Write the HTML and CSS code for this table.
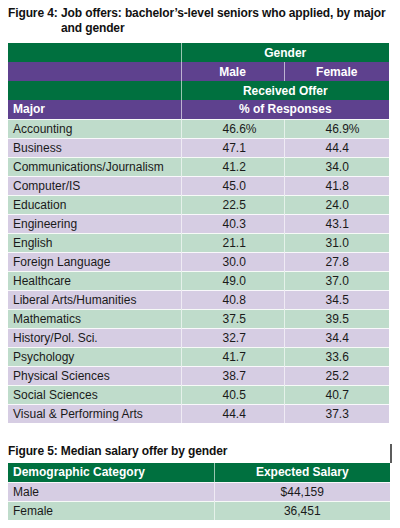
FILE: index.html
```html
<!DOCTYPE html>
<html lang="en">
<head>
    <meta charset="UTF-8">
    <meta name="viewport" content="width=device-width, initial-scale=1.0">
    <title>Job offers by major and gender</title>
    <link rel="stylesheet" href="styles.css">
</head>
<body>
    <div class="page">
        <h2 class="fig-title">
            <span class="fig-label">Figure 4:</span>
            <span class="fig-text">Job offers: bachelor’s-level seniors who applied, by major and gender</span>
        </h2>

        <table class="data offers">
            <colgroup>
                <col class="c-major">
                <col class="c-male">
                <col class="c-female">
            </colgroup>
            <thead>
                <tr class="green">
                    <th class="split"></th>
                    <th colspan="2">Gender</th>
                </tr>
                <tr class="purple">
                    <th class="split"></th>
                    <th class="split">Male</th>
                    <th>Female</th>
                </tr>
                <tr class="green">
                    <th class="split"></th>
                    <th colspan="2">Received Offer</th>
                </tr>
                <tr class="purple">
                    <th class="split left">Major</th>
                    <th colspan="2">% of Responses</th>
                </tr>
            </thead>
            <tbody>
                <tr class="lg"><td>Accounting</td><td>46.6%</td><td>46.9%</td></tr>
                <tr class="lp"><td>Business</td><td>47.1</td><td>44.4</td></tr>
                <tr class="lg"><td>Communications/Journalism</td><td>41.2</td><td>34.0</td></tr>
                <tr class="lp"><td>Computer/IS</td><td>45.0</td><td>41.8</td></tr>
                <tr class="lg"><td>Education</td><td>22.5</td><td>24.0</td></tr>
                <tr class="lp"><td>Engineering</td><td>40.3</td><td>43.1</td></tr>
                <tr class="lg"><td>English</td><td>21.1</td><td>31.0</td></tr>
                <tr class="lp"><td>Foreign Language</td><td>30.0</td><td>27.8</td></tr>
                <tr class="lg"><td>Healthcare</td><td>49.0</td><td>37.0</td></tr>
                <tr class="lp"><td>Liberal Arts/Humanities</td><td>40.8</td><td>34.5</td></tr>
                <tr class="lg"><td>Mathematics</td><td>37.5</td><td>39.5</td></tr>
                <tr class="lp"><td>History/Pol. Sci.</td><td>32.7</td><td>34.4</td></tr>
                <tr class="lg"><td>Psychology</td><td>41.7</td><td>33.6</td></tr>
                <tr class="lp"><td>Physical Sciences</td><td>38.7</td><td>25.2</td></tr>
                <tr class="lg"><td>Social Sciences</td><td>40.5</td><td>40.7</td></tr>
                <tr class="lp"><td>Visual &amp; Performing Arts</td><td>44.4</td><td>37.3</td></tr>
            </tbody>
        </table>

        <h2 class="fig-title second">Figure 5: Median salary offer by gender</h2>

        <table class="data salary">
            <colgroup>
                <col class="c-demo">
                <col class="c-salary">
            </colgroup>
            <thead>
                <tr class="green">
                    <th class="split left">Demographic Category</th>
                    <th>Expected Salary</th>
                </tr>
            </thead>
            <tbody>
                <tr class="lp"><td>Male</td><td class="mid">$44,159</td></tr>
                <tr class="lg"><td>Female</td><td class="mid">36,451</td></tr>
            </tbody>
        </table>
    </div>
</body>
</html>
```

FILE: styles.css
```css
body {
    margin: 0;
    background: #fff;
    font-family: 'Liberation Sans', Arial, sans-serif;
    color: #1a1a1a;
}
.page {
    padding: 6px 0 0 8px;
}
.fig-title {
    display: flex;
    margin: 0;
    width: 390px;
    font-size: 12px;
    line-height: 15px;
    font-weight: bold;
    letter-spacing: -0.12px;
    color: #111;
}
.fig-label {
    flex: 0 0 53px;
}
.fig-text {
    flex: 1;
}
.fig-title.second {
    display: block;
    box-sizing: border-box;
    width: 384px;
    height: 19px;
    margin-top: 21px;
    border-right: 2px solid #5c5c5c;
}
.data {
    border-collapse: collapse;
    table-layout: fixed;
    font-size: 12px;
}
.offers {
    width: 381px;
    margin-top: 7px;
}
.salary {
    width: 382px;
}
.c-major { width: 173px; }
.c-male { width: 103px; }
.c-female { width: 105px; }
.c-demo { width: 206px; }
.c-salary { width: 176px; }

.data th,
.data td {
    height: 19px;
    padding: 0;
    box-sizing: border-box;
    white-space: nowrap;
}
.data th {
    color: #fff;
    font-weight: bold;
    text-align: center;
}
.data th.left {
    text-align: left;
    padding-left: 5px;
}
.data th.split,
.data td:not(:last-child) {
    border-right: 1px solid rgba(255, 255, 255, 0.6);
}
.data td {
    border-top: 1px solid rgba(255, 255, 255, 0.85);
    padding-left: 41px;
}
.data td:first-child {
    padding-left: 5px;
}
.data td.mid {
    padding-left: 0;
    text-align: center;
}
.green { background: #00703f; }
.purple { background: #5e418e; }
.lg { background: #bfdccb; }
.lp { background: #d6cde3; }
```
